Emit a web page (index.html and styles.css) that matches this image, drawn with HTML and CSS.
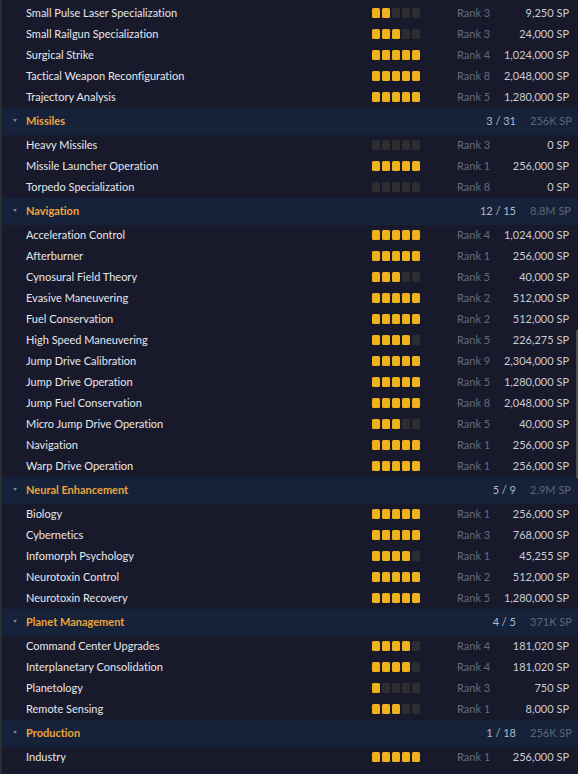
FILE: index.html
```html
<!DOCTYPE html>
<html>
<head>
<meta charset="utf-8">
<link rel="stylesheet" href="styles.css">
</head>
<body>
<div class="panel">
  <div class="list">
    <div class="row"><span class="name">Small Pulse Laser Specialization</span><span class="lv l2"><i></i><i></i><i></i><i></i><i></i></span><span class="rank">Rank 3</span><span class="sp">9,250 SP</span></div>
    <div class="row"><span class="name">Small Railgun Specialization</span><span class="lv l3"><i></i><i></i><i></i><i></i><i></i></span><span class="rank">Rank 3</span><span class="sp">24,000 SP</span></div>
    <div class="row"><span class="name">Surgical Strike</span><span class="lv l5"><i></i><i></i><i></i><i></i><i></i></span><span class="rank">Rank 4</span><span class="sp">1,024,000 SP</span></div>
    <div class="row"><span class="name">Tactical Weapon Reconfiguration</span><span class="lv l5"><i></i><i></i><i></i><i></i><i></i></span><span class="rank">Rank 8</span><span class="sp">2,048,000 SP</span></div>
    <div class="row"><span class="name">Trajectory Analysis</span><span class="lv l5"><i></i><i></i><i></i><i></i><i></i></span><span class="rank">Rank 5</span><span class="sp">1,280,000 SP</span></div>

    <div class="group"><span class="chev"></span><span class="title">Missiles</span><span class="count">3 / 31</span><span class="total">256K SP</span></div>
    <div class="row"><span class="name">Heavy Missiles</span><span class="lv l0"><i></i><i></i><i></i><i></i><i></i></span><span class="rank">Rank 3</span><span class="sp">0 SP</span></div>
    <div class="row"><span class="name">Missile Launcher Operation</span><span class="lv l5"><i></i><i></i><i></i><i></i><i></i></span><span class="rank">Rank 1</span><span class="sp">256,000 SP</span></div>
    <div class="row"><span class="name">Torpedo Specialization</span><span class="lv l0"><i></i><i></i><i></i><i></i><i></i></span><span class="rank">Rank 8</span><span class="sp">0 SP</span></div>

    <div class="group"><span class="chev"></span><span class="title">Navigation</span><span class="count">12 / 15</span><span class="total">8.8M SP</span></div>
    <div class="row"><span class="name">Acceleration Control</span><span class="lv l5"><i></i><i></i><i></i><i></i><i></i></span><span class="rank">Rank 4</span><span class="sp">1,024,000 SP</span></div>
    <div class="row"><span class="name">Afterburner</span><span class="lv l5"><i></i><i></i><i></i><i></i><i></i></span><span class="rank">Rank 1</span><span class="sp">256,000 SP</span></div>
    <div class="row"><span class="name">Cynosural Field Theory</span><span class="lv l3"><i></i><i></i><i></i><i></i><i></i></span><span class="rank">Rank 5</span><span class="sp">40,000 SP</span></div>
    <div class="row"><span class="name">Evasive Maneuvering</span><span class="lv l5"><i></i><i></i><i></i><i></i><i></i></span><span class="rank">Rank 2</span><span class="sp">512,000 SP</span></div>
    <div class="row"><span class="name">Fuel Conservation</span><span class="lv l5"><i></i><i></i><i></i><i></i><i></i></span><span class="rank">Rank 2</span><span class="sp">512,000 SP</span></div>
    <div class="row"><span class="name">High Speed Maneuvering</span><span class="lv l4"><i></i><i></i><i></i><i></i><i></i></span><span class="rank">Rank 5</span><span class="sp">226,275 SP</span></div>
    <div class="row"><span class="name">Jump Drive Calibration</span><span class="lv l5"><i></i><i></i><i></i><i></i><i></i></span><span class="rank">Rank 9</span><span class="sp">2,304,000 SP</span></div>
    <div class="row"><span class="name">Jump Drive Operation</span><span class="lv l5"><i></i><i></i><i></i><i></i><i></i></span><span class="rank">Rank 5</span><span class="sp">1,280,000 SP</span></div>
    <div class="row"><span class="name">Jump Fuel Conservation</span><span class="lv l5"><i></i><i></i><i></i><i></i><i></i></span><span class="rank">Rank 8</span><span class="sp">2,048,000 SP</span></div>
    <div class="row"><span class="name">Micro Jump Drive Operation</span><span class="lv l3"><i></i><i></i><i></i><i></i><i></i></span><span class="rank">Rank 5</span><span class="sp">40,000 SP</span></div>
    <div class="row"><span class="name">Navigation</span><span class="lv l5"><i></i><i></i><i></i><i></i><i></i></span><span class="rank">Rank 1</span><span class="sp">256,000 SP</span></div>
    <div class="row"><span class="name">Warp Drive Operation</span><span class="lv l5"><i></i><i></i><i></i><i></i><i></i></span><span class="rank">Rank 1</span><span class="sp">256,000 SP</span></div>

    <div class="group"><span class="chev"></span><span class="title">Neural Enhancement</span><span class="count">5 / 9</span><span class="total">2.9M SP</span></div>
    <div class="row"><span class="name">Biology</span><span class="lv l5"><i></i><i></i><i></i><i></i><i></i></span><span class="rank">Rank 1</span><span class="sp">256,000 SP</span></div>
    <div class="row"><span class="name">Cybernetics</span><span class="lv l5"><i></i><i></i><i></i><i></i><i></i></span><span class="rank">Rank 3</span><span class="sp">768,000 SP</span></div>
    <div class="row"><span class="name">Infomorph Psychology</span><span class="lv l4"><i></i><i></i><i></i><i></i><i></i></span><span class="rank">Rank 1</span><span class="sp">45,255 SP</span></div>
    <div class="row"><span class="name">Neurotoxin Control</span><span class="lv l5"><i></i><i></i><i></i><i></i><i></i></span><span class="rank">Rank 2</span><span class="sp">512,000 SP</span></div>
    <div class="row"><span class="name">Neurotoxin Recovery</span><span class="lv l5"><i></i><i></i><i></i><i></i><i></i></span><span class="rank">Rank 5</span><span class="sp">1,280,000 SP</span></div>

    <div class="group"><span class="chev"></span><span class="title">Planet Management</span><span class="count">4 / 5</span><span class="total">371K SP</span></div>
    <div class="row"><span class="name">Command Center Upgrades</span><span class="lv l4"><i></i><i></i><i></i><i></i><i></i></span><span class="rank">Rank 4</span><span class="sp">181,020 SP</span></div>
    <div class="row"><span class="name">Interplanetary Consolidation</span><span class="lv l4"><i></i><i></i><i></i><i></i><i></i></span><span class="rank">Rank 4</span><span class="sp">181,020 SP</span></div>
    <div class="row"><span class="name">Planetology</span><span class="lv l1"><i></i><i></i><i></i><i></i><i></i></span><span class="rank">Rank 3</span><span class="sp">750 SP</span></div>
    <div class="row"><span class="name">Remote Sensing</span><span class="lv l3"><i></i><i></i><i></i><i></i><i></i></span><span class="rank">Rank 1</span><span class="sp">8,000 SP</span></div>

    <div class="group"><span class="chev"></span><span class="title">Production</span><span class="count">1 / 18</span><span class="total">256K SP</span></div>
    <div class="row"><span class="name">Industry</span><span class="lv l5"><i></i><i></i><i></i><i></i><i></i></span><span class="rank">Rank 1</span><span class="sp">256,000 SP</span></div>
  </div>
  <div class="thumb"></div>
</div>
</body>
</html>
```
FILE: styles.css
```css
html, body {
  margin: 0;
  padding: 0;
  background: #181a2b;
  height: 100%;
  overflow: hidden;
}

body {
  font-family: Lato, "Liberation Sans", sans-serif;
  font-size: 11px;
  line-height: 13px;
  color: #e4e5ea;
  font-variant-ligatures: none;
}

.panel {
  position: relative;
  height: 774px;
  border-left: 2px solid #2c2d31;
  background: #181a2b;
}

.list {
  padding-top: 2.5px;
}

.row {
  display: grid;
  grid-template-columns: 1fr 85px 43px 69px;
  align-items: center;
  height: 21px;
  padding: 0 9px 0 24px;
  box-sizing: border-box;
}

.row > span:not(.lv) {
  position: relative;
  top: -1px;
}

.name {
  color: #e6e7ec;
  white-space: nowrap;
}

.lv {
  display: flex;
  gap: 2px;
}

.lv i {
  display: block;
  width: 8px;
  height: 10px;
  border-radius: 1.5px;
  background: #2e2d30;
}

.l1 i:nth-child(-n+1),
.l2 i:nth-child(-n+2),
.l3 i:nth-child(-n+3),
.l4 i:nth-child(-n+4),
.l5 i:nth-child(-n+5) {
  background: #f0b21c;
}

.rank {
  color: #656a79;
}

.sp {
  color: #c9cbd3;
  text-align: right;
  white-space: nowrap;
}

.group {
  display: flex;
  align-items: center;
  height: 27px;
  background: #15223a;
  padding: 0 9px 1px 10.5px;
  box-sizing: border-box;
}

.chev {
  width: 0;
  height: 0;
  border-left: 2px solid transparent;
  border-right: 2px solid transparent;
  border-top: 3px solid #7d8291;
}

.title {
  margin-left: 9.5px;
  color: #eda43a;
  font-weight: 700;
}

.count {
  margin-left: auto;
  color: #b4b8c4;
}

.total {
  width: 39px;
  margin-left: 14px;
  color: #5e6679;
  white-space: nowrap;
}

.thumb {
  position: absolute;
  right: 0;
  top: 330px;
  width: 2px;
  height: 148px;
  background: #4f4c48;
}
```
